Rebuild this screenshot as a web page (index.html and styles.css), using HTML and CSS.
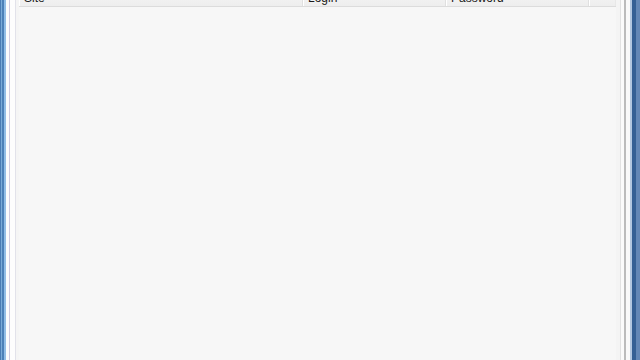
FILE: index.html
```html
<!DOCTYPE html>
<html>
<head>
<meta charset="utf-8">
<link rel="stylesheet" href="styles.css">
</head>
<body>
<div class="list">
  <div class="header">
    <div class="col col-site">Site</div>
    <div class="col col-login">Login</div>
    <div class="col col-pass">Password</div>
    <div class="col col-fill"></div>
  </div>
  <div class="rows"></div>
</div>
</body>
</html>
```

FILE: styles.css
```css
html, body {
  margin: 0;
  padding: 0;
  height: 100%;
  overflow: hidden;
}
body {
  font-family: "Liberation Sans", Arial, sans-serif;
  font-size: 12px;
  color: #1a1a1a;
  background-color: #f7f7f7;
  background-image:
    linear-gradient(to right,
      #4a7cb4 0 1px, #7aaad8 1px 2px, #4d80b8 2px 4px, #92bde6 4px 6px,
      #fbfbfd 6px 9px, #d0cadf 9px 10px, #fdfdfd 10px 15px,
      #e2e2ea 15px 16px, #f5f5f5 16px 19px),
    linear-gradient(to right,
      #f4f4f4 0 4px, #e2e2e2 4px 5px, #fbfbfb 5px 8px, #bcbcbc 8px 10px,
      #fafafa 10px 14px, #b3c6e0 14px 16px, #355f95 16px 20px, #6386b6 20px 24px);
  background-size: 19px 100%, 24px 100%;
  background-position: left top, right top;
  background-repeat: no-repeat;
  display: flex;
}
.list {
  margin-left: 19px;
  width: 597px;
  display: flex;
  flex-direction: column;
}
.header {
  display: flex;
  height: 24px;
  margin-top: -18px;
  background: linear-gradient(#ffffff, #f2f2f2 60%, #eeeeee);
  border-bottom: 1px solid #dcdcdc;
}
.col {
  box-sizing: border-box;
  padding: 9px 0 0 5px;
  line-height: 14px;
  border-right: 1px solid #e0e0e0;
  box-shadow: inset 1px 0 0 #ffffff;
}
.col-site { width: 284px; }
.col-login { width: 143px; }
.col-pass { width: 143px; }
.col-fill { flex: 1; border-right: 1px solid #e8e8e8; }
.rows {
  flex: 1;
}
```
